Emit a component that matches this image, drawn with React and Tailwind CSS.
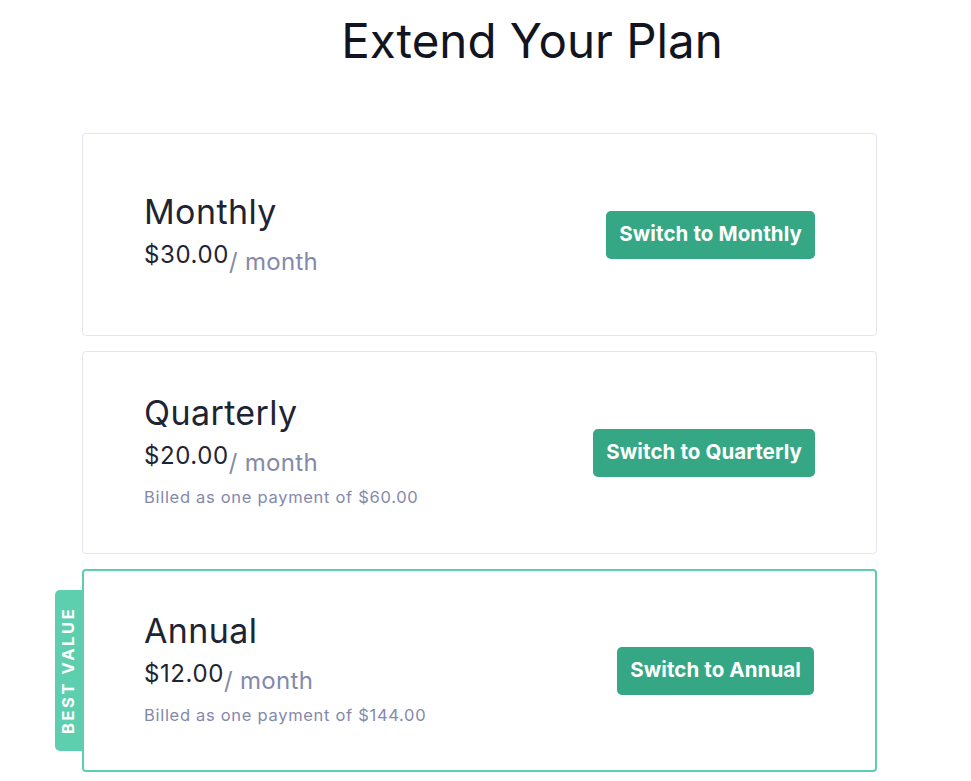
const PLANS = [
  { name: 'Monthly', price: '$30.00', billed: null, best: false },
  { name: 'Quarterly', price: '$20.00', billed: 'Billed as one payment of $60.00', best: false },
  { name: 'Annual', price: '$12.00', billed: 'Billed as one payment of $144.00', best: true },
];

function PlanCard({ plan }) {
  return (
    <div
      className={`relative h-[203px] rounded-[4px] bg-white flex items-center justify-between pl-[61px] pr-[61px] ${
        plan.best ? 'border-2 border-[#5dcfae]' : 'border border-[#e4e5ef]'
      }`}
    >
      {plan.best && (
        <div className="absolute left-[-29px] top-[19px] bottom-[19px] w-[28px] bg-[#5dcfae] rounded-l-[5px] flex items-center justify-center">
          <span className="-rotate-90 whitespace-nowrap text-white font-bold text-[16.5px] tracking-[2.6px]">
            BEST VALUE
          </span>
        </div>
      )}
      <div className={`pb-[6px] ${plan.best ? '-ml-px' : ''}`}>
        <h2 className="text-[34px] leading-[40px] text-[#1f2433] font-normal tracking-[0.4px]">{plan.name}</h2>
        <div className="flex items-baseline mt-[7px]">
          <span className="text-[24px] text-[#1f2433] leading-[32px] tracking-[0.6px]">{plan.price}</span>
          <span className="text-[24px] text-[#8489ab] leading-[32px] relative top-[7px] tracking-[0.3px]">/ month</span>
        </div>
        {plan.billed && (
          <p className="text-[16.5px] text-[#8489ab] mt-[15px] leading-[20px] tracking-[0.7px]">{plan.billed}</p>
        )}
      </div>
      <button className="bg-[#35a784] text-white font-bold text-[20.5px] h-[48px] px-[13px] rounded-[5px] tracking-[0.1px]">
        Switch to {plan.name}
      </button>
    </div>
  );
}

export default function App() {
  return (
    <div className="min-h-[781px] bg-white font-['Inter',sans-serif] pb-[10px]">
      <h1 className="pl-[93px] pt-[17px] text-center text-[47.5px] leading-[48px] text-[#121420] font-normal">
        Extend Your Plan
      </h1>
      <div className="ml-[82px] w-[795px] mt-[68px] flex flex-col gap-[15px]">
        {PLANS.map((p) => (
          <PlanCard key={p.name} plan={p} />
        ))}
      </div>
    </div>
  );
}
